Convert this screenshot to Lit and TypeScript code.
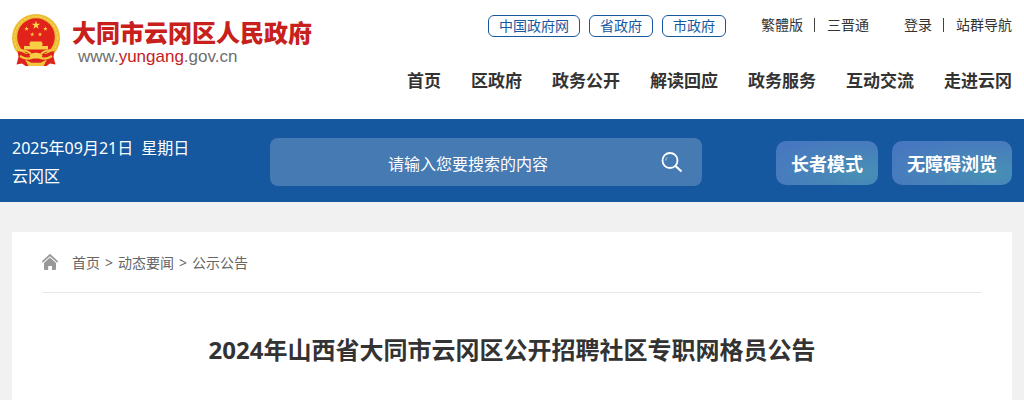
import { LitElement, html, css, svg } from "lit";
import { customElement } from "lit/decorators.js";

const star = (cx: number, cy: number, r: number) => {
  const points = Array.from({ length: 10 }, (_, i) => {
    const radius = i % 2 ? r * 0.4 : r;
    const angle = (Math.PI / 5) * i - Math.PI / 2;
    return `${(cx + radius * Math.cos(angle)).toFixed(2)},${(cy + radius * Math.sin(angle)).toFixed(2)}`;
  }).join(" ");
  return svg`<polygon points=${points} fill="#f9d64a"></polygon>`;
};

@customElement("site-emblem")
class SiteEmblem extends LitElement {
  static styles = css`
    :host { display: block; flex: none; }
    svg { display: block; }
  `;
  render() {
    return html`<svg width="48" height="53" viewBox="0 0 48 53" aria-hidden="true">
      <ellipse cx="24" cy="24" rx="24" ry="24" fill="#edbd35"></ellipse>
      <ellipse cx="24" cy="24" rx="21.5" ry="21.5" fill="none" stroke="#f5d352" stroke-width="1.3" stroke-dasharray="2.5 1.5"></ellipse>
      <circle cx="24" cy="23" r="18.8" fill="#e2231c"></circle>
      <path d="M5.5 36 L14 40 H34 L42.5 36 L41.5 43 L43.5 50.5 L38 49.5 L34.5 52 H13.5 L10 49.5 L4.5 50.5 L6.5 43 Z" fill="#dc241d"></path>
      ${star(24, 11.2, 4.4)} ${star(14.6, 14.8, 2.3)} ${star(20.2, 20.4, 2.3)}
      ${star(28, 20.4, 2.3)} ${star(33.4, 14.8, 2.3)}
      <path d="M18.5 27.5 H29.5 L31 30.5 H30.2 V32 H36 V35.5 H12 V32 H17.8 V30.5 H17 Z" fill="#f6cf45"></path>
      <path d="M5.5 36.5 C12 35.5 16 37 19 40 M42.5 36.5 C36 35.5 32 37 29 40" fill="none" stroke="#f3c63c" stroke-width="2"></path>
      <path d="M8 42 C14 46 18 45.5 22 42.5 M40 42 C34 46 30 45.5 26 42.5" fill="none" stroke="#f3c63c" stroke-width="2.2"></path>
      <path d="M17.5 42 C18 37.5 30 37.5 30.5 42 L28 44.5 H20 Z" fill="#f6cf45"></path>
      <path d="M13 45.5 L16.5 52 H31.5 L35 45.5 L28.5 48.8 H19.5 Z" fill="#f3c63c"></path>
    </svg>`;
  }
}

@customElement("app-root")
class AppRoot extends LitElement {
  static styles = css`
    :host {
      display: block;
      min-height: 100vh;
      background: #f1f1f1;
      color: #333;
      font-family: "Noto Sans", "Noto Sans CJK SC", sans-serif;
      font-size: 14px;
      line-height: 20px;
    }
    * { box-sizing: border-box; }
    a { color: inherit; text-decoration: none; white-space: nowrap; }
    .header {
      display: flex;
      justify-content: space-between;
      background: #fff;
      padding: 14px 12px 24px;
    }
    .brand { display: flex; gap: 12px; align-items: flex-start; }
    .brand-text { padding-top: 7px; white-space: nowrap; }
    .brand-name {
      margin: 0;
      color: #c8201c;
      font-size: 24px;
      font-weight: 900;
      line-height: 26px;
      font-family: "Liberation Serif", "Noto Sans CJK SC", sans-serif;
    }
    .brand-url {
      display: block;
      padding-left: 6px;
      color: #6e6e6e;
      font: 17px/20px "Liberation Sans", Arial, sans-serif;
    }
    .brand-host { color: #c8201c; }
    .header-right { display: flex; flex-direction: column; align-items: flex-end; gap: 30px; }
    .top-links { display: flex; gap: 35px; padding-top: 1px; }
    .portals { display: flex; gap: 9px; }
    .portal {
      border: 1px solid #15589f;
      border-radius: 6px;
      padding: 0 10px;
      color: #15589f;
    }
    .link-group { display: flex; align-items: center; gap: 11px; height: 20px; }
    .divider { width: 1px; height: 14px; margin-right: 1px; background: #444; }
    .nav { display: flex; gap: 30px; font-size: 17px; font-weight: 700; line-height: 28px; }
    .bar {
      display: grid;
      grid-template-columns: 258px minmax(0, 432px) 1fr;
      align-items: center;
      background: #15589f;
      color: #fff;
      padding: 15px 12px 12px;
    }
    .today { font-size: 16px; line-height: 28px; }
    .today-line { display: flex; gap: 8px; }
    .search {
      display: flex;
      height: 48px;
      border-radius: 8px;
      background: #457ab3;
    }
    .search-input {
      flex: 1;
      min-width: 0;
      border: 0;
      outline: 0;
      padding: 3px 0 0;
      background: none;
      color: #fff;
      font: inherit;
      font-size: 16px;
      text-align: center;
    }
    .search-input::placeholder { color: #fff; opacity: 1; }
    .search-button {
      width: 36px;
      padding: 0;
      border: 0;
      background: none;
      cursor: pointer;
    }
    .search-button svg { display: block; }
    .modes { display: flex; justify-content: flex-end; gap: 14px; padding-top: 2px; }
    .mode {
      height: 44px;
      padding: 1px 15px 0;
      border: 0;
      border-radius: 10px;
      background: radial-gradient(ellipse at 82% 72%, #4790b5 0%, #4784b9 38%, #4777c0 85%);
      color: #fff;
      font: inherit;
      font-size: 18px;
      font-weight: 700;
      white-space: nowrap;
    }
    .card { margin: 30px 12px 0; padding: 0 30px 30px; min-height: 168px; background: #fff; }
    .crumbs {
      display: flex;
      align-items: center;
      height: 61px;
      border-bottom: 1px solid #e8e8e8;
      color: #666;
    }
    .home { display: block; margin-right: 14px; }
    .crumb-list { display: flex; gap: 5px; margin: 0; padding: 2px 0 0; list-style: none; }
    .crumb { display: flex; gap: 5px; }
    .title {
      margin: 37px 0 0;
      text-align: center;
      font-size: 24px;
      font-weight: 700;
      line-height: 40px;
    }
  `;

  private nav = ["首页", "区政府", "政务公开", "解读回应", "政务服务", "互动交流", "走进云冈"];
  private portals = ["中国政府网", "省政府", "市政府"];
  private groups = [["繁體版", "三晋通"], ["登录", "站群导航"]];
  private crumbs = ["首页", "动态要闻", "公示公告"];

  render() {
    return html`
      <header class="header">
        <div class="brand">
          <site-emblem></site-emblem>
          <div class="brand-text">
            <p class="brand-name">大同市云冈区人民政府</p>
            <a class="brand-url" href="#">www.<span class="brand-host">yungang</span>.gov.cn</a>
          </div>
        </div>
        <div class="header-right">
          <div class="top-links">
            <div class="portals">
              ${this.portals.map((p) => html`<a class="portal" href="#">${p}</a>`)}
            </div>
            ${this.groups.map(
              ([a, b]) => html`<div class="link-group">
                <a href="#">${a}</a><span class="divider"></span><a href="#">${b}</a>
              </div>`
            )}
          </div>
          <nav class="nav">${this.nav.map((n) => html`<a href="#">${n}</a>`)}</nav>
        </div>
      </header>
      <section class="bar">
        <div class="today">
          <div class="today-line"><span>2025年09月21日</span><span>星期日</span></div>
          <div>云冈区</div>
        </div>
        <form class="search" role="search" @submit=${(e: Event) => e.preventDefault()}>
          <input class="search-input" type="text" aria-label="请输入您要搜索的内容" placeholder="请输入您要搜索的内容" />
          <button class="search-button" type="submit" aria-label="搜索">
            <svg width="20" height="48" viewBox="0 0 20 48" overflow="visible" fill="none" stroke="#fff">
              <circle cx="4" cy="22.5" r="7.5" stroke-width="1.8"></circle>
              <path d="M9.5 28 L15.5 33.5" stroke-width="2.2"></path>
              <path d="M-.2 22.5 A4.3 4.3 0 0 1 1.4 19.2" stroke-width=".9" stroke-opacity=".7"></path>
            </svg>
          </button>
        </form>
        <div class="modes">
          <button class="mode" type="button">长者模式</button>
          <button class="mode" type="button">无障碍浏览</button>
        </div>
      </section>
      <main class="card">
        <nav class="crumbs">
          <svg class="home" width="16" height="18" viewBox="0 0 16 18" aria-hidden="true">
            <path d="M.8 8.6 L8 2 L15.2 8.6" fill="none" stroke="#999" stroke-width="1.7" stroke-linecap="round" stroke-linejoin="round"></path>
            <path d="M8 4.6 L14 10 V16 Q14 17 13 17 H10 V13 H6.2 V17 H3 Q2 17 2 16 V10 Z" fill="#999"></path>
          </svg>
          <ol class="crumb-list">
            ${this.crumbs.map(
              (c, i) => html`<li class="crumb">${i ? html`<span>&gt;</span>` : ""}<a href="#">${c}</a></li>`
            )}
          </ol>
        </nav>
        <h1 class="title">2024年山西省大同市云冈区公开招聘社区专职网格员公告</h1>
      </main>
    `;
  }
}
